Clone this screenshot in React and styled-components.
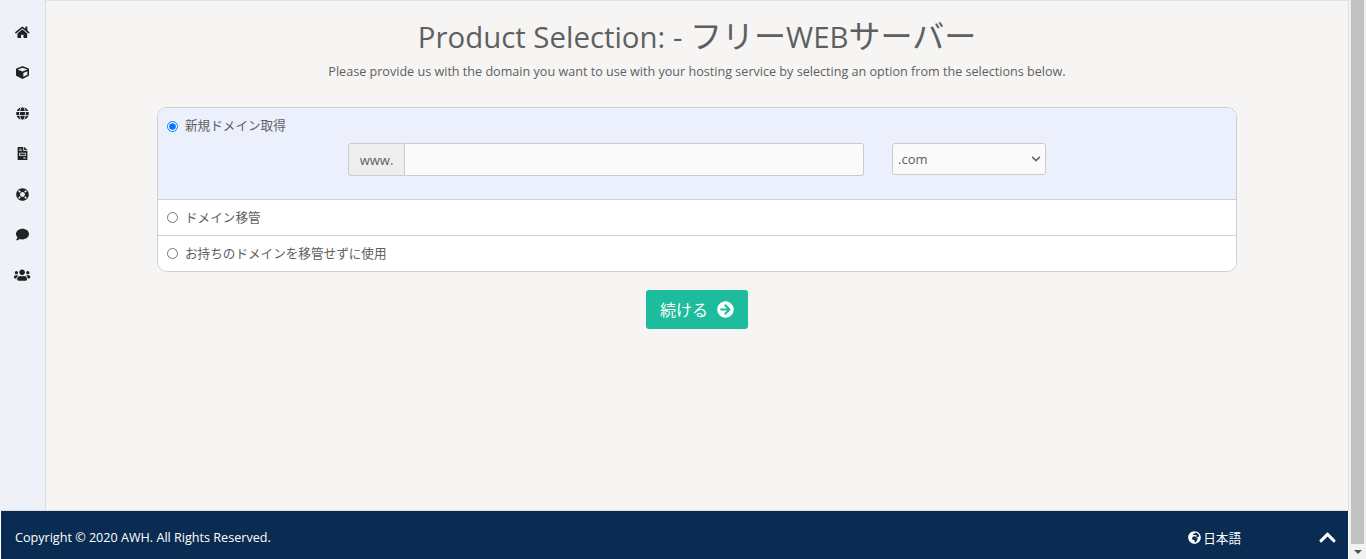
import React from 'react';
import styled, { createGlobalStyle } from 'styled-components';
import {
  FaHome, FaCube, FaGlobe, FaFileInvoice, FaLifeRing, FaComment, FaUsers,
  FaArrowCircleRight, FaGlobeAfrica, FaChevronUp, FaChevronDown,
} from 'react-icons/fa';

const GlobalStyle = createGlobalStyle`
  html, body {
    margin: 0;
    height: 100%;
    overflow: hidden;
  }
  body {
    font-family: "Open Sans", "Noto Sans CJK JP", sans-serif;
    color: #5e5f61;
  }
  * { box-sizing: border-box; }
`;

const Page = styled.div`
  display: flex;
  width: 1366px;
  height: 559px;
`;

const Main = styled.div`
  display: flex;
  flex-direction: column;
  width: 1349px;
  height: 559px;
`;

const Body = styled.div`
  display: flex;
  height: 511px;
  border-bottom: 1px solid #dcdcdc;
`;

const Sidebar = styled.nav`
  display: flex;
  flex-direction: column;
  width: 46px;
  padding-top: 12px;
  background: #eff1f8;
  border-right: 1px solid #dcdcdc;
`;

const NavItem = styled.a`
  display: flex;
  align-items: center;
  justify-content: center;
  height: 40.5px;
  color: #222;
`;

const Content = styled.main`
  flex: 1;
  display: flex;
  flex-direction: column;
  align-items: center;
  background: #f6f5f3;
  border-top: 1px solid #e2e2e2;
  border-right: 1px solid #e2e2e2;
`;

const Title = styled.h1`
  height: 40px;
  margin: 16px 0 0;
  font-size: 29.4px;
  line-height: 41px;
  font-weight: 400;
  white-space: nowrap;
  color: #5e5f61;
`;

const Kana = styled.span`
  font-size: 32px;
  line-height: 1;
`;

const Lead = styled.p`
  margin: 6px 0 0;
  font-size: 12.6px;
  line-height: 17px;
  color: #5e5f61;
`;

const OptionPanel = styled.div`
  width: 1080px;
  margin-top: 27px;
  border: 1px solid #cfcfd3;
  border-radius: 10px;
  overflow: hidden;
  background: #fff;
`;

const Option = styled.div`
  height: ${(p) => (p.$active ? '92px' : p.$last ? '35px' : '36px')};
  padding: 9px 9px 0;
  background: ${(p) => (p.$active ? '#ebf0fc' : '#fff')};
  border-bottom: ${(p) => (p.$last ? 'none' : '1px solid #cfcfd3')};
`;

const OptionLabel = styled.label`
  display: flex;
  align-items: center;
  gap: 7px;
  font-size: 12.6px;
  line-height: 17px;
  color: #5e5f61;
`;

const Radio = styled.input`
  width: 11px;
  height: 11px;
  margin: ${(p) => (p.$active ? '2px' : '0')} 0 0;
  accent-color: #0075ff;
`;

const DomainRow = styled.div`
  display: flex;
  align-items: flex-start;
  margin: 9px 0 0 181px;
`;

const InputGroup = styled.div`
  display: flex;
  width: 516px;
  height: 33px;
`;

const Addon = styled.span`
  display: flex;
  align-items: center;
  justify-content: center;
  width: 57px;
  background: #eee;
  border: 1px solid #ccc;
  border-radius: 3px 0 0 3px;
  font-size: 13px;
  color: #5e5f61;
`;

const DomainInput = styled.input`
  flex: 1;
  min-width: 0;
  border: 1px solid #ccc;
  border-left: none;
  border-radius: 0 3px 3px 0;
  background: #fafafa;
  outline: none;
`;

const TldSelect = styled.div`
  display: flex;
  align-items: center;
  justify-content: space-between;
  width: 154px;
  height: 32px;
  margin-left: 28px;
  padding: 0 4px 0 5px;
  background: #fafafa;
  border: 1px solid #ccc;
  border-radius: 3px;
  font-size: 13px;
  color: #5e5f61;
  svg { font-size: 10px; color: #666; }
`;

const ContinueButton = styled.button`
  display: flex;
  align-items: center;
  justify-content: center;
  gap: 9px;
  width: 102px;
  height: 39px;
  margin-top: 18px;
  padding: 0 0 1px;
  border: none;
  border-radius: 3px;
  background: #1dbc9c;
  color: #fff;
  font-family: inherit;
  font-size: 16px;
  svg { font-size: 17px; }
`;

const Footer = styled.footer`
  display: flex;
  align-items: center;
  height: 48px;
  margin: 0 1px;
  padding: 4px 11px 0 14px;
  background: #0a2c52;
  color: #fff;
  font-size: 12.6px;
`;

const Copyright = styled.span`
  flex: 1;
`;

const Language = styled.a`
  display: flex;
  align-items: center;
  gap: 2px;
  margin-right: 77px;
  svg { font-size: 13px; }
`;

const BackToTop = styled.a`
  display: flex;
  font-size: 19px;
`;

const Scrollbar = styled.div`
  display: flex;
  flex-direction: column;
  width: 17px;
  height: 559px;
  padding: 0 2px;
  background: #f1f1f1;
`;

const ScrollThumb = styled.div`
  height: 544px;
  background: #c1c1c1;
`;

const ScrollArrow = styled.div`
  flex: 1;
  display: flex;
  align-items: center;
  justify-content: center;
  &::before {
    content: '';
    border-left: 4px solid transparent;
    border-right: 4px solid transparent;
    border-top: 4px solid #505050;
  }
`;

// wide glyphs get a bigger box so they keep the same height as the others
const navIcons = [
  { Icon: FaHome, size: 14.6 },
  { Icon: FaCube, size: 13 },
  { Icon: FaGlobe, size: 13 },
  { Icon: FaFileInvoice, size: 13 },
  { Icon: FaLifeRing, size: 13 },
  { Icon: FaComment, size: 13 },
  { Icon: FaUsers, size: 16.25 },
];

function App() {
  return (
    <Page>
      <GlobalStyle />
      <Main>
        <Body>
          <Sidebar>
            {navIcons.map(({ Icon, size }, i) => (
              <NavItem key={i}><Icon size={size} /></NavItem>
            ))}
          </Sidebar>
          <Content>
            <Title>Product Selection: - <Kana>フリー</Kana>WEB<Kana>サーバー</Kana></Title>
            <Lead>Please provide us with the domain you want to use with your hosting service by selecting an option from the selections below.</Lead>
            <OptionPanel>
              <Option $active>
                <OptionLabel>
                  <Radio $active type="radio" name="domain" defaultChecked />
                  新規ドメイン取得
                </OptionLabel>
                <DomainRow>
                  <InputGroup>
                    <Addon>www.</Addon>
                    <DomainInput type="text" />
                  </InputGroup>
                  <TldSelect>
                    .com
                    <FaChevronDown />
                  </TldSelect>
                </DomainRow>
              </Option>
              <Option>
                <OptionLabel>
                  <Radio type="radio" name="domain" />
                  ドメイン移管
                </OptionLabel>
              </Option>
              <Option $last>
                <OptionLabel>
                  <Radio type="radio" name="domain" />
                  お持ちのドメインを移管せずに使用
                </OptionLabel>
              </Option>
            </OptionPanel>
            <ContinueButton>
              続ける
              <FaArrowCircleRight />
            </ContinueButton>
          </Content>
        </Body>
        <Footer>
          <Copyright>Copyright © 2020 AWH. All Rights Reserved.</Copyright>
          <Language><FaGlobeAfrica />日本語</Language>
          <BackToTop><FaChevronUp /></BackToTop>
        </Footer>
      </Main>
      <Scrollbar>
        <ScrollThumb />
        <ScrollArrow />
      </Scrollbar>
    </Page>
  );
}

export default App;
